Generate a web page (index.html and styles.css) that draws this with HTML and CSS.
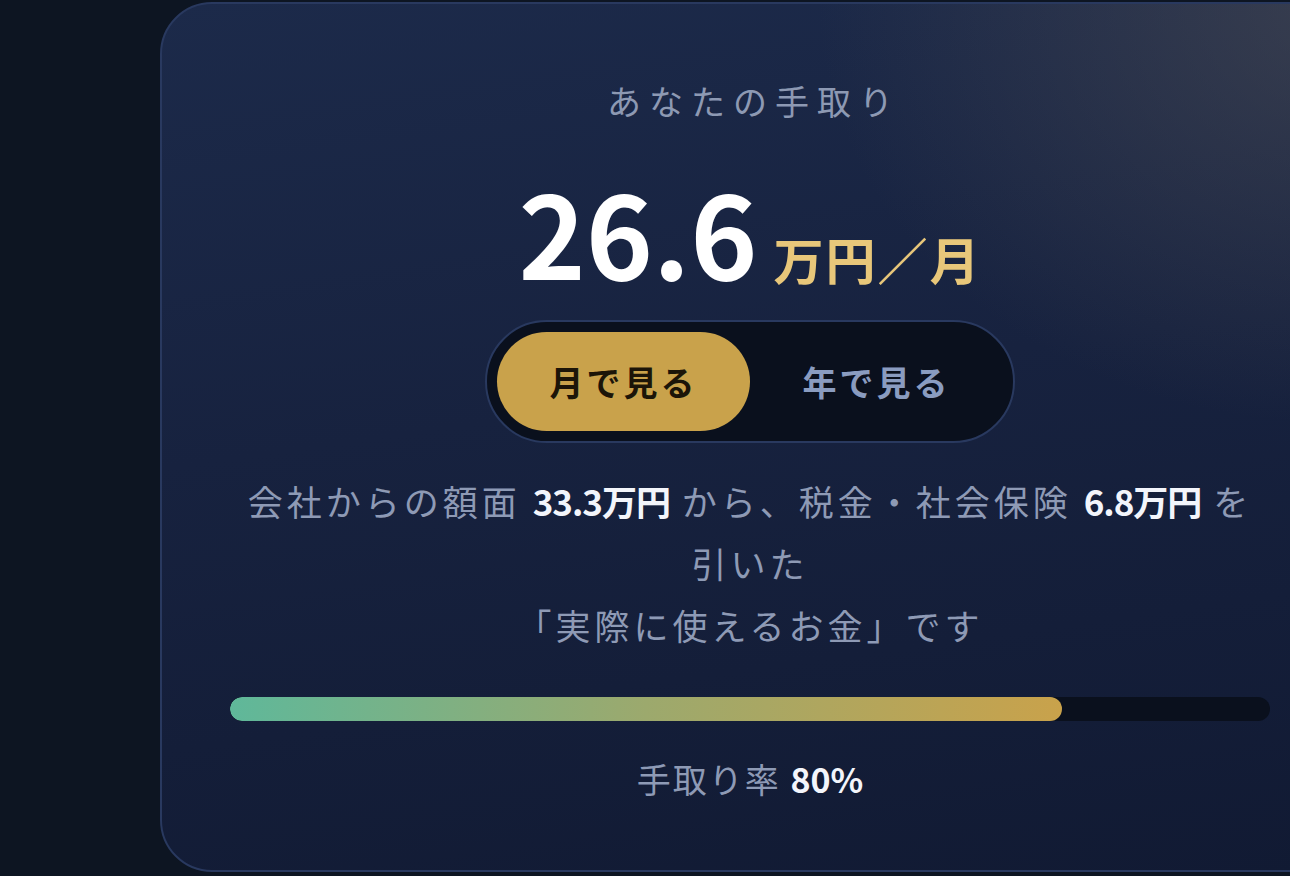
FILE: index.html
```html
<!DOCTYPE html>
<html lang="ja">
<head>
    <meta charset="UTF-8">
    <title>あなたの手取り</title>
    <link rel="stylesheet" href="styles.css">
</head>
<body>
<div class="card">
    <div class="card-label">あなたの手取り</div>

    <!-- 手取り額 -->
    <div class="amount">
        <span class="amount-value">26.6</span>
        <span class="amount-unit">万円／月</span>
    </div>

    <!-- 月 / 年 切り替え -->
    <div class="toggle">
        <button class="toggle-btn active">月で見る</button>
        <button class="toggle-btn">年で見る</button>
    </div>

    <p class="description">
        会社からの額面 <strong>33.3万円</strong> から、税金・社会保険 <strong>6.8万円</strong> を<span class="nobr">引いた</span><br>
        「実際に使えるお金」です
    </p>

    <!-- 手取り率バー -->
    <div class="rate-bar">
        <div class="rate-fill" style="width: 80%;"></div>
    </div>
    <div class="rate-label">手取り率 <strong>80%</strong></div>
</div>
</body>
</html>
```

FILE: styles.css
```css
html, body {
    height: 100%;
}

body {
    margin: 0;
    overflow: hidden;
    background-color: #0d1522;
    font-family: "Noto Sans CJK JP", "Noto Sans", sans-serif;
    color: #8e9ab5;
}

/* カード */
.card {
    box-sizing: border-box;
    width: 1180px;
    height: 870px;
    margin: 2px 0 0 160px;
    padding: 69px 68px 0;
    border: 2px solid #29395f;
    border-radius: 52px;
    background:
        radial-gradient(ellipse 520px 420px at 100% 0%, rgba(80, 80, 86, 0.55), rgba(80, 80, 86, 0) 100%),
        linear-gradient(172deg, #1c2a4a 0%, #17223f 45%, #111a33 100%);
    display: flex;
    flex-direction: column;
    align-items: center;
    text-align: center;
}

.card-label {
    font-size: 34px;
    line-height: 56px;
    letter-spacing: 8px;
    margin-right: -8px;
    color: #8d99b3;
}

/* 金額 */
.amount {
    display: flex;
    align-items: baseline;
    margin-top: 45px;
    line-height: 1;
}

.amount-value {
    font-size: 114px;
    font-weight: 700;
    color: #ffffff;
    letter-spacing: 0;
}

.amount-unit {
    margin-left: 16px;
    font-size: 50px;
    font-weight: 700;
    color: #e8c77a;
    letter-spacing: 2px;
}

/* 切り替え */
.toggle {
    display: flex;
    margin-top: 32px;
    padding: 10px;
    border: 2px solid #29395f;
    border-radius: 62px;
    background-color: #0a101d;
}

.toggle-btn {
    width: 253px;
    height: 99px;
    border: none;
    border-radius: 50px;
    background: transparent;
    font-family: inherit;
    font-size: 34px;
    font-weight: 700;
    letter-spacing: 3px;
    color: #8a9cc0;
    cursor: pointer;
}

.toggle-btn.active {
    background-color: #c9a24b;
    color: #1c1508;
}

/* 説明 */
.description {
    margin: 27px 0 0;
    font-size: 35px;
    line-height: 62px;
    letter-spacing: 4px;
}

.description strong {
    color: #f3f5fb;
    font-weight: 700;
    letter-spacing: -1px;
}

.nobr {
    white-space: nowrap;
}

/* バー */
.rate-bar {
    align-self: stretch;
    height: 24px;
    margin-top: 41px;
    border-radius: 12px;
    background-color: #0a101d;
    overflow: hidden;
}

.rate-fill {
    height: 100%;
    border-radius: 12px;
    background: linear-gradient(90deg, #5fb89a 0%, #9ca96d 50%, #c9a24b 100%);
}

.rate-label {
    margin-top: 34px;
    font-size: 34px;
    line-height: 48px;
    letter-spacing: 2px;
}

.rate-label strong {
    color: #f3f5fb;
    font-weight: 700;
    letter-spacing: 0;
}
```
